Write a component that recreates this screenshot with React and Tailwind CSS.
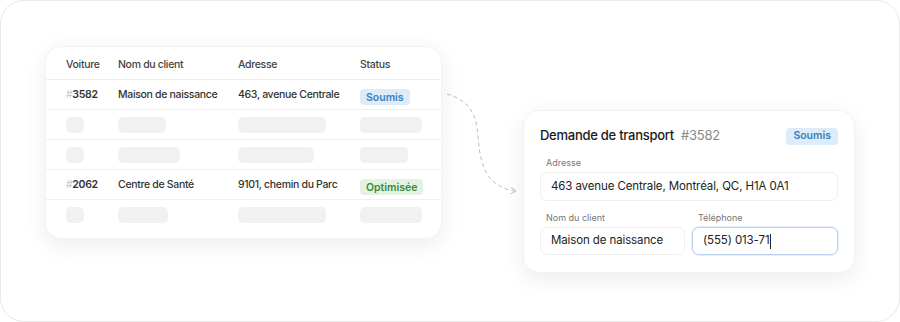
import React from "react";

const font = { fontFamily: "Inter, 'Noto Sans', sans-serif" };

function Badge({ tone, big, children }) {
  const cls =
    tone === "green"
      ? "bg-[#e4f3e0] text-[#3a8a3e]"
      : "bg-[#deebf8] text-[#3b7fc0]";
  return (
    <span
      className={`inline-flex items-center px-[6px] rounded-[4px] text-[10.5px] font-semibold ${
        big ? "h-[17px] px-[7px]" : "h-[16px]"
      } ${cls}`}
    >
      {children}
    </span>
  );
}

function Skel({ w }) {
  return <div className={`h-[16px] rounded-[5px] bg-[#f1f1f1] ${w}`} />;
}

function Row({ last, children }) {
  return (
    <div className={`flex items-center h-[30px] pl-[20px] ${last ? "h-[29px]" : "border-b border-[#f0f0f0]"}`}>
      {children}
    </div>
  );
}

function DataRow({ id, name, address, status, tone }) {
  return (
    <Row>
      <div className="w-[52px] text-[10.5px] font-semibold text-[#333]">
        <span className="text-[#c4c4c4] font-normal">#</span>
        {id}
      </div>
      <div className="w-[120px] text-[10.5px] font-medium text-[#333]">{name}</div>
      <div className="w-[122px] text-[10.5px] font-medium text-[#333]">{address}</div>
      <div className="tracking-normal">
        <Badge tone={tone}>{status}</Badge>
      </div>
    </Row>
  );
}

function SkelRow({ a, b, c, last }) {
  return (
    <Row last={last}>
      <div className="w-[52px]">
        <Skel w="w-[18px]" />
      </div>
      <div className="w-[120px]">
        <Skel w={a} />
      </div>
      <div className="w-[122px]">
        <Skel w={b} />
      </div>
      <div>
        <Skel w={c} />
      </div>
    </Row>
  );
}

function Field({ label, children, active, small, className = "" }) {
  return (
    <div className={className}>
      <div className="pl-[6px] text-[9px] text-[#777] h-[18px] leading-[18px]">{label}</div>
      <div
        className={`flex items-center px-[10px] rounded-[7px] text-[11.5px] tracking-[-0.01em] text-[#222] ${
          active
            ? "border border-[#b9d3ee] shadow-[0_0_0_1px_#e3eefa]"
            : "border border-[#efefef]"
        } ${small ? "h-[28px]" : "h-[29px]"}`}
      >
        {children}
      </div>
    </div>
  );
}

export default function App() {
  return (
    <div className="w-[900px] h-[322px] bg-white" style={font}>
      <div className="w-[900px] h-[322px] rounded-[24px] border border-[#e9e9e9] flex items-start pl-[44px] pt-[45px]">
        <div className="w-[397px] bg-white rounded-[16px] shadow-[0_6px_22px_rgba(0,0,0,0.08)] border border-[#f3f3f3] pb-[8px] tracking-[-0.02em]">
          <div className="flex items-center h-[33px] pt-[3px] pl-[20px] border-b border-[#eeeeee] text-[10.5px] font-medium text-[#444]">
            <div className="w-[52px]">Voiture</div>
            <div className="w-[120px]">Nom du client</div>
            <div className="w-[122px]">Adresse</div>
            <div>Status</div>
          </div>
          <DataRow id="3582" name="Maison de naissance" address="463, avenue Centrale" status="Soumis" />
          <SkelRow a="w-[48px]" b="w-[88px]" c="w-[62px]" />
          <SkelRow a="w-[62px]" b="w-[76px]" c="w-[48px]" />
          <DataRow id="2062" name="Centre de Santé" address="9101, chemin du Parc" status="Optimisée" tone="green" />
          <SkelRow a="w-[50px]" b="w-[88px]" c="w-[62px]" last />
        </div>

        <svg width="81" height="115" viewBox="0 0 81 115" className="mt-[40px] shrink-0" fill="none">
          <path
            d="M5 8 C 24 14, 34 23, 36 50 C 38 82, 46 100, 72 105"
            stroke="#bdbdbd"
            strokeWidth="1"
            strokeDasharray="4 3"
          />
          <path d="M69 101.5 L74 105 L68.5 108" stroke="#bdbdbd" strokeWidth="1" />
        </svg>

        <div className="w-[332px] mt-[64px] bg-white rounded-[16px] shadow-[0_6px_22px_rgba(0,0,0,0.08)] border border-[#f3f3f3] px-[16px] pt-[15px] pb-[17px]">
          <div className="flex items-center justify-between h-[20px] mb-[8px]">
            <div className="text-[13px] tracking-[-0.02em] text-[#1a1a1a] font-medium">
              Demande de transport
              <span className="ml-[7px] text-[#8a8a8a] font-normal">#3582</span>
            </div>
            <Badge big>Soumis</Badge>
          </div>
          <Field label="Adresse">463 avenue Centrale, Montréal, QC, H1A 0A1</Field>
          <div className="flex gap-[7px] mt-[8px]">
            <Field label="Nom du client" small className="w-[145px]">
              Maison de naissance
            </Field>
            <Field label="Téléphone" active small className="flex-1">
              (555) 013-71
              <span className="inline-block w-[1px] h-[15px] bg-[#222] ml-[1px]" />
            </Field>
          </div>
        </div>
      </div>
    </div>
  );
}
